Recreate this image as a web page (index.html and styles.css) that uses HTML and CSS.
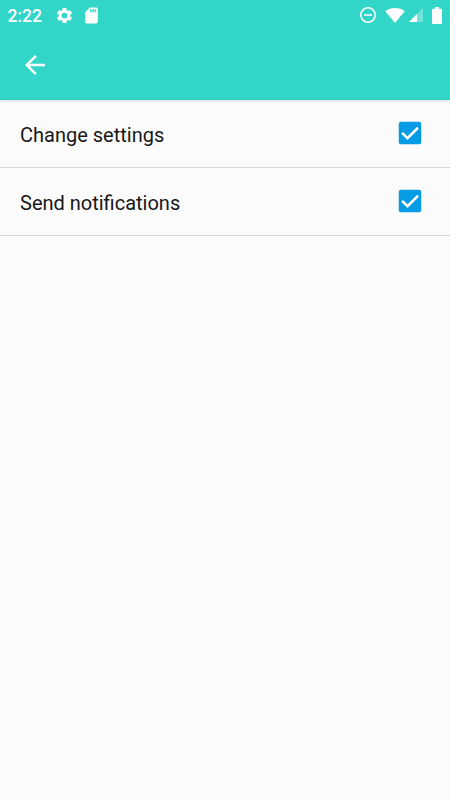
FILE: index.html
```html
<!DOCTYPE html>
<html lang="en">
<head>
<meta charset="utf-8">
<title>Settings</title>
<link rel="stylesheet" href="styles.css">
</head>
<body>
<header class="header">
  <div class="status">
    <span class="time">2:22</span>
    <svg class="gear" viewBox="0 0 24 24"><path d="M19.14 12.94c.04-.3.06-.61.06-.94 0-.32-.02-.64-.07-.94l2.03-1.58c.18-.14.23-.41.12-.61l-1.92-3.32c-.12-.22-.37-.29-.59-.22l-2.39.96c-.5-.38-1.03-.7-1.62-.94l-.36-2.54c-.04-.24-.24-.41-.48-.41h-3.84c-.24 0-.43.17-.47.41l-.36 2.54c-.59.24-1.13.57-1.62.94l-2.39-.96c-.22-.08-.47 0-.59.22L2.74 8.87c-.12.21-.08.47.12.61l2.03 1.58c-.05.3-.09.63-.09.94s.02.64.07.94l-2.03 1.58c-.18.14-.23.41-.12.61l1.92 3.32c.12.22.37.29.59.22l2.39-.96c.5.38 1.03.7 1.62.94l.36 2.54c.05.24.24.41.48.41h3.84c.24 0 .44-.17.47-.41l.36-2.54c.59-.24 1.13-.56 1.62-.94l2.39.96c.22.08.47 0 .59-.22l1.92-3.32c.12-.22.07-.47-.12-.61zM12 15.6A3.6 3.6 0 1 1 12 8.4a3.6 3.6 0 0 1 0 7.2z"/></svg>
    <svg class="card" viewBox="0 0 24 24"><path d="M18 2h-8L4.02 8 4 20c0 1.1.9 2 2 2h12c1.1 0 2-.9 2-2V4c0-1.1-.9-2-2-2zm-6 6h-2V4h2zm3 0h-2V4h2zm3 0h-2V4h2z"/></svg>
    <div class="system">
      <svg class="dnd" viewBox="0 0 18 18"><circle cx="9" cy="9" r="7.2"/><path d="M5 9h8"/></svg>
      <svg class="wifi" viewBox="0 0 20 15"><path d="M10 15L.3 3.2C2.8 1.2 6.1 0 10 0s7.2 1.2 9.7 3.2z"/></svg>
      <svg class="signal" viewBox="0 0 15 15"><path class="faint" d="M15 0v15H0z"/><path d="M8.500 6.500V15H0z"/></svg>
      <svg class="battery" viewBox="0 0 10 17"><path d="M3 0h4v1.7h1.7c.7 0 1.3.6 1.3 1.3v12.700c0 .7-.6 1.300-1.300 1.300H1.300C.6 17 0 16.400 0 15.700V3c0-.7.6-1.300 1.300-1.300H3z"/></svg>
    </div>
  </div>
  <div class="toolbar">
    <svg class="icon back" viewBox="0 0 24 24"><path d="M20 11H7.83l5.59-5.59L12 4l-8 8 8 8 1.41-1.41L7.83 13H20z"/></svg>
  </div>
</header>
<main>
  <label class="row"><span>Change settings</span><svg class="icon check" viewBox="0 0 24 24"><rect x="3" y="3" width="18" height="18" rx="1.7"/><path d="M5.700 11.900l4.300 4.300 8.400-8.400"/></svg></label>
  <label class="row"><span>Send notifications</span><svg class="icon check" viewBox="0 0 24 24"><rect x="3" y="3" width="18" height="18" rx="1.7"/><path d="M5.700 11.900l4.300 4.300 8.400-8.400"/></svg></label>
</main>
</body>
</html>
```
FILE: styles.css
```css
* { box-sizing: border-box; }
body {
  margin: 0;
  min-height: 800px;
  background: #fbfbfb;
  color: #171717;
  font-family: Roboto, sans-serif;
}
svg { display: block; flex: none; fill: #fff; }
.header {
  height: 100px;
  background: #31d6c9;
  border-bottom: 1px solid #2ed0c8;
  box-shadow: 0 1px 3px rgba(0, 0, 0, .14);
}
.status {
  display: flex;
  align-items: center;
  height: 30px;
  padding: 0 8px 0 7.5px;
}
.time {
  width: 47.5px;
  padding-top: 2px;
  color: #fff;
  font-size: 17.5px;
  font-weight: 500;
  line-height: 20px;
}
.gear { width: 19px; height: 19px; }
.card { width: 19px; height: 19px; margin-left: 8px; }
.system { display: flex; align-items: center; margin-left: auto; }
.dnd { width: 18px; height: 18px; }
.dnd circle, .dnd path { fill: none; stroke: #fff; stroke-width: 1.6; }
.wifi { width: 20px; height: 15px; margin-left: 8px; }
.signal { width: 14px; height: 14px; margin-left: 3.5px; }
.faint { opacity: .3; }
.battery { width: 10px; height: 17px; margin-left: 9.5px; }
.toolbar {
  display: flex;
  align-items: center;
  height: 70px;
  padding-left: 20px;
}
.icon { width: 30px; height: 30px; }
.row {
  display: flex;
  align-items: center;
  justify-content: space-between;
  height: 68px;
  padding: 0 25px 0 20px;
  border-bottom: 1px solid #d8d8d8;
  font-size: 20px;
  line-height: 24px;
}
.row span { padding-top: 2px; }
.check { margin-bottom: 1px; }
.check rect { fill: #059be5; }
.check path { fill: none; stroke: #fff; stroke-width: 2; }
```
